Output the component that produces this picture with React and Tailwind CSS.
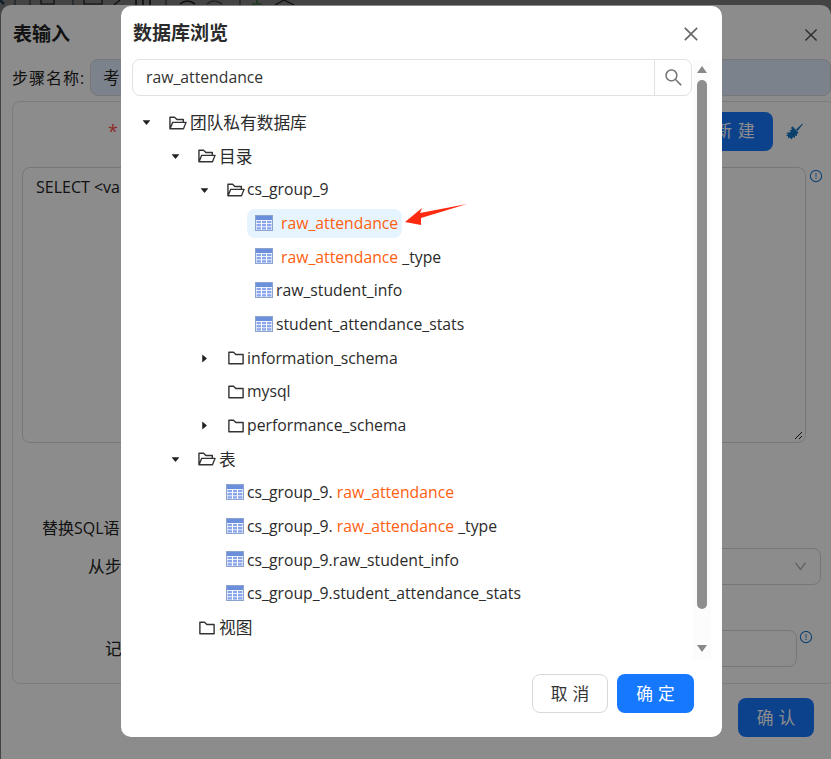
import React from "react";
import { AiOutlineFolderOpen, AiOutlineFolder, AiFillCaretDown, AiFillCaretRight, AiOutlineSearch, AiOutlineClose, AiOutlineExclamationCircle, AiOutlineDown } from "react-icons/ai";

const font = "font-['Open_Sans','Noto_Sans_CJK_SC',sans-serif]";

function TableIcon() {
  return (
    <svg width="18" height="16" viewBox="0 0 18 16" className="mt-[-2px] shrink-0">
      <rect x="0.5" y="0.5" width="17" height="15" fill="#fff" stroke="#8fa3cf" />
      <rect x="1" y="1" width="16" height="4" fill="#6c8fdc" />
      <g fill="#8aa6ea">
        <rect x="1.5" y="5.8" width="4.5" height="2.4" /><rect x="7" y="5.8" width="4" height="2.4" /><rect x="12" y="5.8" width="4.5" height="2.4" />
        <rect x="1.5" y="9" width="4.5" height="2.4" /><rect x="7" y="9" width="4" height="2.4" /><rect x="12" y="9" width="4.5" height="2.4" />
        <rect x="1.5" y="12.2" width="4.5" height="2.4" /><rect x="7" y="12.2" width="4" height="2.4" /><rect x="12" y="12.2" width="4.5" height="2.4" />
      </g>
    </svg>
  );
}

function Row({ left, caret, icon, children }) {
  return (
    <div className="flex h-[33.67px] items-center" style={{ paddingLeft: left }}>
      <span className="flex w-[27px] shrink-0 items-center text-[11px] text-[#222]">
        {caret === "down" && <AiFillCaretDown />}
        {caret === "right" && <AiFillCaretRight />}
      </span>
      {icon === "open" && <AiOutlineFolderOpen className="mr-[1px] shrink-0 text-[20px] text-[#333]" />}
      {icon === "closed" && <AiOutlineFolder className="mr-[1px] shrink-0 text-[20px] text-[#333]" />}
      {children}
    </div>
  );
}

const Hit = ({ children }) => <span className="text-[#ff6010]">{children}</span>;
const Cjk = ({ children }) => <span className="ml-[1px] text-[16.7px]">{children}</span>;

function TableRow({ pl, gap = "ml-[3px]", children }) {
  return (
    <div className="flex h-[33.67px] items-center" style={{ paddingLeft: pl }}>
      <TableIcon />
      <span className={gap}>{children}</span>
    </div>
  );
}

function Broom() {
  return (
    <svg width="18" height="17" viewBox="0 0 18 17" className="shrink-0">
      <path d="M17.5 0.5 L11 6.5 L12.5 8 L17.9 1.2 Z" fill="#1677c4" />
      <path d="M6 4.5 L8 3.5 L9 5 L13.5 9.5 L12 11 L12 13 L10 12.5 L10 15 L8 14 L6.5 16.5 L5 14.5 L3 15.5 L3 13 L1 13 L3 11 L1 10 L6 9 L4.5 7 L7 7 Z" fill="#1677c4" />
    </svg>
  );
}

function Background() {
  return (
    <div className="flex h-[759px] w-[831px] flex-col overflow-hidden bg-[#7d7d7d]">
      <svg width="831" height="5" viewBox="0 0 831 5" className="block shrink-0">
        <g stroke="#1a1a1a" strokeWidth="1.2" fill="none">
          <path d="M0 0 L4 4" stroke="#1a3a55" strokeWidth="2.5" />
          <path d="M15 0V5M30 0V5M73 0V5M166 0V5M240 0V5" stroke="#2a3a4a" />
          <path d="M41 0V4H54V0" />
          <path d="M84 0V4H102V0" />
          <path d="M114 5L120 0" />
          <path d="M136 0V5M143 0V5M150 0V5" strokeWidth="1.6" />
          <path d="M180 4Q187 -2 195 4" strokeWidth="1.6" />
          <path d="M207 4Q214 -2 222 4" stroke="#444" strokeWidth="1.6" />
          <path d="M252 4H262M257 0V4" stroke="#1f5a22" />
          <path d="M275 5L284 0L294 5" />
        </g>
      </svg>
      <div className={`ml-[1px] flex flex-1 flex-col rounded-t-[10px] bg-white pl-[11px] pt-[14px] ${font} text-[#222]`}>
        <div className="flex h-[30px] items-center justify-between pr-[11px] text-[19px] font-bold">
          <span className="ml-[1px]">表输入</span>
          <AiOutlineClose className="mt-[2px] text-[18px] font-normal text-[#555]" />
        </div>
        <div className="mt-[10px] flex h-[37px] items-center text-[16px] tracking-[1px]">
          <span className="w-[78px] shrink-0">步骤名称:</span>
          <div className="flex h-[37px] w-[745px] items-center rounded-[8px] border border-[#d9d9d9] bg-[#e2edff] px-[12px] text-[16.7px]">考</div>
        </div>
        <div className="mt-[5px] h-[583px] w-[823px] rounded-[8px] border border-[#e0e0e0] px-[9px] pt-[9px]">
          <div className="flex h-[40px] items-center justify-between pr-[22px]">
            <span className="ml-[86px] mt-[1px] text-[18px] text-[#ff4d4f]">*</span>
            <div className="flex items-center gap-[12px]">
              <span className="flex h-[39px] w-[76px] items-center justify-center rounded-[8px] bg-[#1677ff] pl-[6px] text-[16.7px] tracking-[6px] text-white">新建</span>
              <Broom />
            </div>
          </div>
          <div className="mt-[16px] flex items-start gap-[3px]">
            <div className="relative h-[276px] w-[784px] rounded-[8px] border border-[#d9d9d9] px-[13px] py-[7px] text-[16px]">
              SELECT &lt;va
              <svg width="9" height="9" viewBox="0 0 9 9" className="absolute bottom-[2px] right-[2px]">
                <path d="M1 8L8 1M5 8L8 5" stroke="#222" strokeWidth="1" />
              </svg>
            </div>
            <AiOutlineExclamationCircle className="mt-[2px] text-[14px] text-[#1677cc]" />
          </div>
          <div className="mt-[73px] pl-[20px] text-[16px]">替换SQL语</div>
          <div className="mt-[8px] flex h-[37px] items-center justify-between pr-[4px]">
            <span className="pl-[66px] text-[16.7px]">从步</span>
            <div className="flex h-[37px] w-[300px] items-center justify-end rounded-[8px] border border-[#d9d9d9] pr-[12px]">
              <AiOutlineDown className="text-[15px] text-[#aaa]" />
            </div>
          </div>
          <div className="mt-[45px] flex h-[37px] items-center justify-between pr-[12px]">
            <span className="pl-[83px] text-[16.7px]">记</span>
            <div className="flex items-start gap-[2px]">
              <div className="h-[37px] w-[280px] rounded-[8px] border border-[#d9d9d9]" />
              <AiOutlineExclamationCircle className="text-[14px] text-[#1677cc]" />
            </div>
          </div>
        </div>
        <div className="mt-[14px] flex justify-end pr-[17px]">
          <span className="flex h-[39px] w-[76px] items-center justify-center rounded-[8px] bg-[#1677ff] pl-[5px] text-[16.7px] tracking-[5px] text-white">确认</span>
        </div>
      </div>
    </div>
  );
}

function Scrollbar() {
  return (
    <div className="absolute left-[572px] top-[54px] flex h-[600px] w-[18px] flex-col items-center bg-[#fcfcfc]">
      <svg width="10" height="7" viewBox="0 0 10 7" className="mt-[6px] shrink-0"><path d="M5 0 L10 7 H0 Z" fill="#888" /></svg>
      <div className="mt-[7px] h-[529px] w-[10px] rounded-full bg-[#8e8e8e]" />
      <svg width="10" height="7" viewBox="0 0 10 7" className="mt-auto mb-[8px] shrink-0"><path d="M5 7 L10 0 H0 Z" fill="#888" /></svg>
    </div>
  );
}

function Modal() {
  return (
    <div className={`absolute left-[121px] top-[6px] h-[731px] w-[601px] rounded-[10px] bg-white text-[15.75px] text-[#2b2b2b] ${font}`}>
      <div className="flex h-[53px] items-center justify-between pl-[12px] pr-[21px] pt-[1px]">
        <span className="text-[19px] font-bold text-[#2b2b2b]">数据库浏览</span>
        <AiOutlineClose className="mt-[2px] text-[20px] text-[#666]" />
      </div>
      <div className="ml-[11px] flex h-[37px] w-[560px] items-center rounded-[8px] border border-[#e2e2e2]">
        <span className="flex-1 pl-[13px] pt-[1px] text-[#333]">raw_attendance</span>
        <span className="flex h-[35px] w-[37px] items-center justify-center border-l border-[#e2e2e2]">
          <AiOutlineSearch className="text-[21px] text-[#777]" />
        </span>
      </div>
      <Scrollbar />
      <div className="mt-[10px] h-[540px]">
        <Row left="20px" caret="down" icon="open"><Cjk>团队私有数据库</Cjk></Row>
        <Row left="49px" caret="down" icon="open"><Cjk>目录</Cjk></Row>
        <Row left="78px" caret="down" icon="open"><span>cs_group_9</span></Row>
        <div className="flex h-[33.67px] items-center pl-[126px]">
          <div className="flex h-[29px] items-center rounded-[8px] bg-[#e6f4ff] pl-[8px] pr-[4px]">
            <TableIcon />
            <span className="ml-[8px]"><Hit>raw_attendance</Hit></span>
          </div>
        </div>
        <TableRow pl="134px" gap="ml-[8px]"><Hit>raw_attendance</Hit> _type</TableRow>
        <TableRow pl="134px">raw_student_info</TableRow>
        <TableRow pl="134px">student_attendance_stats</TableRow>
        <Row left="78px" caret="right" icon="closed"><span>information_schema</span></Row>
        <Row left="78px" icon="closed"><span>mysql</span></Row>
        <Row left="78px" caret="right" icon="closed"><span>performance_schema</span></Row>
        <Row left="49px" caret="down" icon="open"><Cjk>表</Cjk></Row>
        <TableRow pl="105px">cs_group_9. <Hit>raw_attendance</Hit></TableRow>
        <TableRow pl="105px">cs_group_9. <Hit>raw_attendance</Hit> _type</TableRow>
        <TableRow pl="105px">cs_group_9.raw_student_info</TableRow>
        <TableRow pl="105px">cs_group_9.student_attendance_stats</TableRow>
        <Row left="49px" icon="closed"><Cjk>视图</Cjk></Row>
      </div>
      <div className="absolute bottom-[24px] right-[28px] flex gap-[9px]">
        <span className="flex h-[39px] w-[76px] items-center justify-center rounded-[8px] border border-[#d9d9d9] pl-[5px] text-[16.7px] tracking-[5px] text-[#333]">取消</span>
        <span className="flex h-[39px] w-[77px] items-center justify-center rounded-[8px] bg-[#1677ff] pl-[5px] text-[16.7px] tracking-[5px] text-white">确定</span>
      </div>
      <svg width="66" height="24" viewBox="0 0 66 24" className="absolute left-[283px] top-[196px]">
        <path d="M1 20 L18 6 L16 11 L63 2 L17 16 L17 23 Z" fill="#ff2a12" />
      </svg>
    </div>
  );
}

export default function App() {
  return (
    <div className="relative h-[759px] w-[831px] overflow-hidden">
      <Background />
      <div className="absolute inset-0 bg-black/45" />
      <Modal />
    </div>
  );
}
